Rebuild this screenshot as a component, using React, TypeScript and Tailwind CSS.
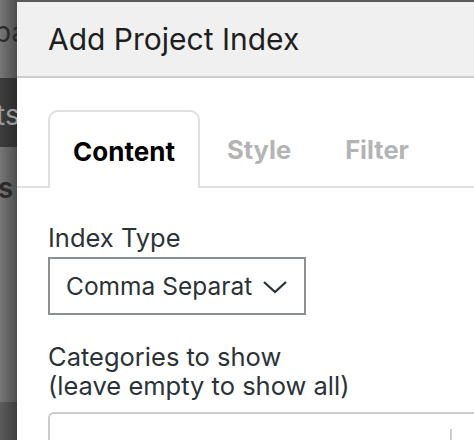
import React from "react";

function BackdropStrip() {
  return (
    <div className="w-[17px] shrink-0 flex flex-col overflow-hidden">
      <div className="h-[78px] bg-gradient-to-r from-[#777777] to-[#4e4e4e] overflow-hidden">
        <p className="-ml-[6px] mt-[15px] text-[28px] leading-[34px] text-[#2a2a2a] whitespace-nowrap">pa</p>
      </div>
      <div className="h-[69px] bg-gradient-to-r from-[#3e3e3e] to-[#2c2c2c] overflow-hidden">
        <p className="-ml-[4px] mt-[20px] text-[28px] leading-[34px] text-[#9a9a9a] whitespace-nowrap">ts</p>
      </div>
      <div className="h-[255px] bg-gradient-to-r from-[#777777] to-[#4e4e4e] overflow-hidden">
        <p className="-ml-[2px] mt-[24px] text-[28px] leading-[34px] font-semibold text-[#2a2a2a] whitespace-nowrap">s</p>
      </div>
      <div className="flex-1 bg-gradient-to-r from-[#5c5c5c] to-[#3e3e3e]" />
    </div>
  );
}

function Tabs() {
  const tabs = ["Content", "Style", "Filter"];
  return (
    <div className="pt-[32px] border-b-2 border-[#e0e0e0] flex pl-[31px]">
      {tabs.map((tab, i) =>
        i === 0 ? (
          <div
            key={tab}
            className="w-[152px] h-[78px] -mb-[2px] pt-[3px] bg-white border-2 border-b-0 border-[#e0e0e0] rounded-t-[10px] flex items-center justify-center text-[26px] font-bold text-black"
          >
            {tab}
          </div>
        ) : (
          <div
            key={tab}
            className="h-[76px] pt-[5px] px-[27px] flex items-center text-[25.5px] font-bold text-[#b4b4b4]"
          >
            {tab}
          </div>
        )
      )}
    </div>
  );
}

export default function App() {
  return (
    <div className="w-[474px] h-[440px] overflow-hidden flex bg-[#5a5a5a] [font-family:Inter,sans-serif]">
      <BackdropStrip />
      <div className="flex-1 mt-[2px] bg-white flex flex-col min-w-0">
        <div className="h-[76px] shrink-0 bg-[#f0f0f0] border-b-2 border-[#cccccc] pl-[31px] flex items-center">
          <h1 className="text-[30px] text-[#1e1e1e] whitespace-nowrap">Add Project Index</h1>
        </div>
        <Tabs />
        <div className="pl-[31px] pt-[35px] flex flex-col">
          <label className="text-[25.5px] leading-[29px] text-[#2c3338] whitespace-nowrap">Index Type</label>
          <div className="mt-[5px] w-[258px] h-[58px] border-2 border-[#8c8f94] flex items-center justify-between pl-[16px] pr-[16px]">
            <span className="text-[24.5px] text-[#2c3338] whitespace-nowrap">Comma Separat</span>
            <svg width="26" height="14" viewBox="0 0 26 14" fill="none" className="shrink-0 mt-[2px]">
              <path d="M2 2l11 10 11-10" stroke="#2c3338" strokeWidth="2.3" />
            </svg>
          </div>
          <label className="mt-[27px] text-[25.5px] leading-[29px] text-[#2c3338] whitespace-nowrap">
            Categories to show
            <br />
            (leave empty to show all)
          </label>
          <div className="mt-[12px] h-[60px] w-[460px] border-2 border-[#cccccc] rounded-[6px] flex items-start">
            <div className="ml-[400px] mt-[15px] w-[2px] h-[30px] bg-[#cccccc]" />
          </div>
        </div>
      </div>
    </div>
  );
}
